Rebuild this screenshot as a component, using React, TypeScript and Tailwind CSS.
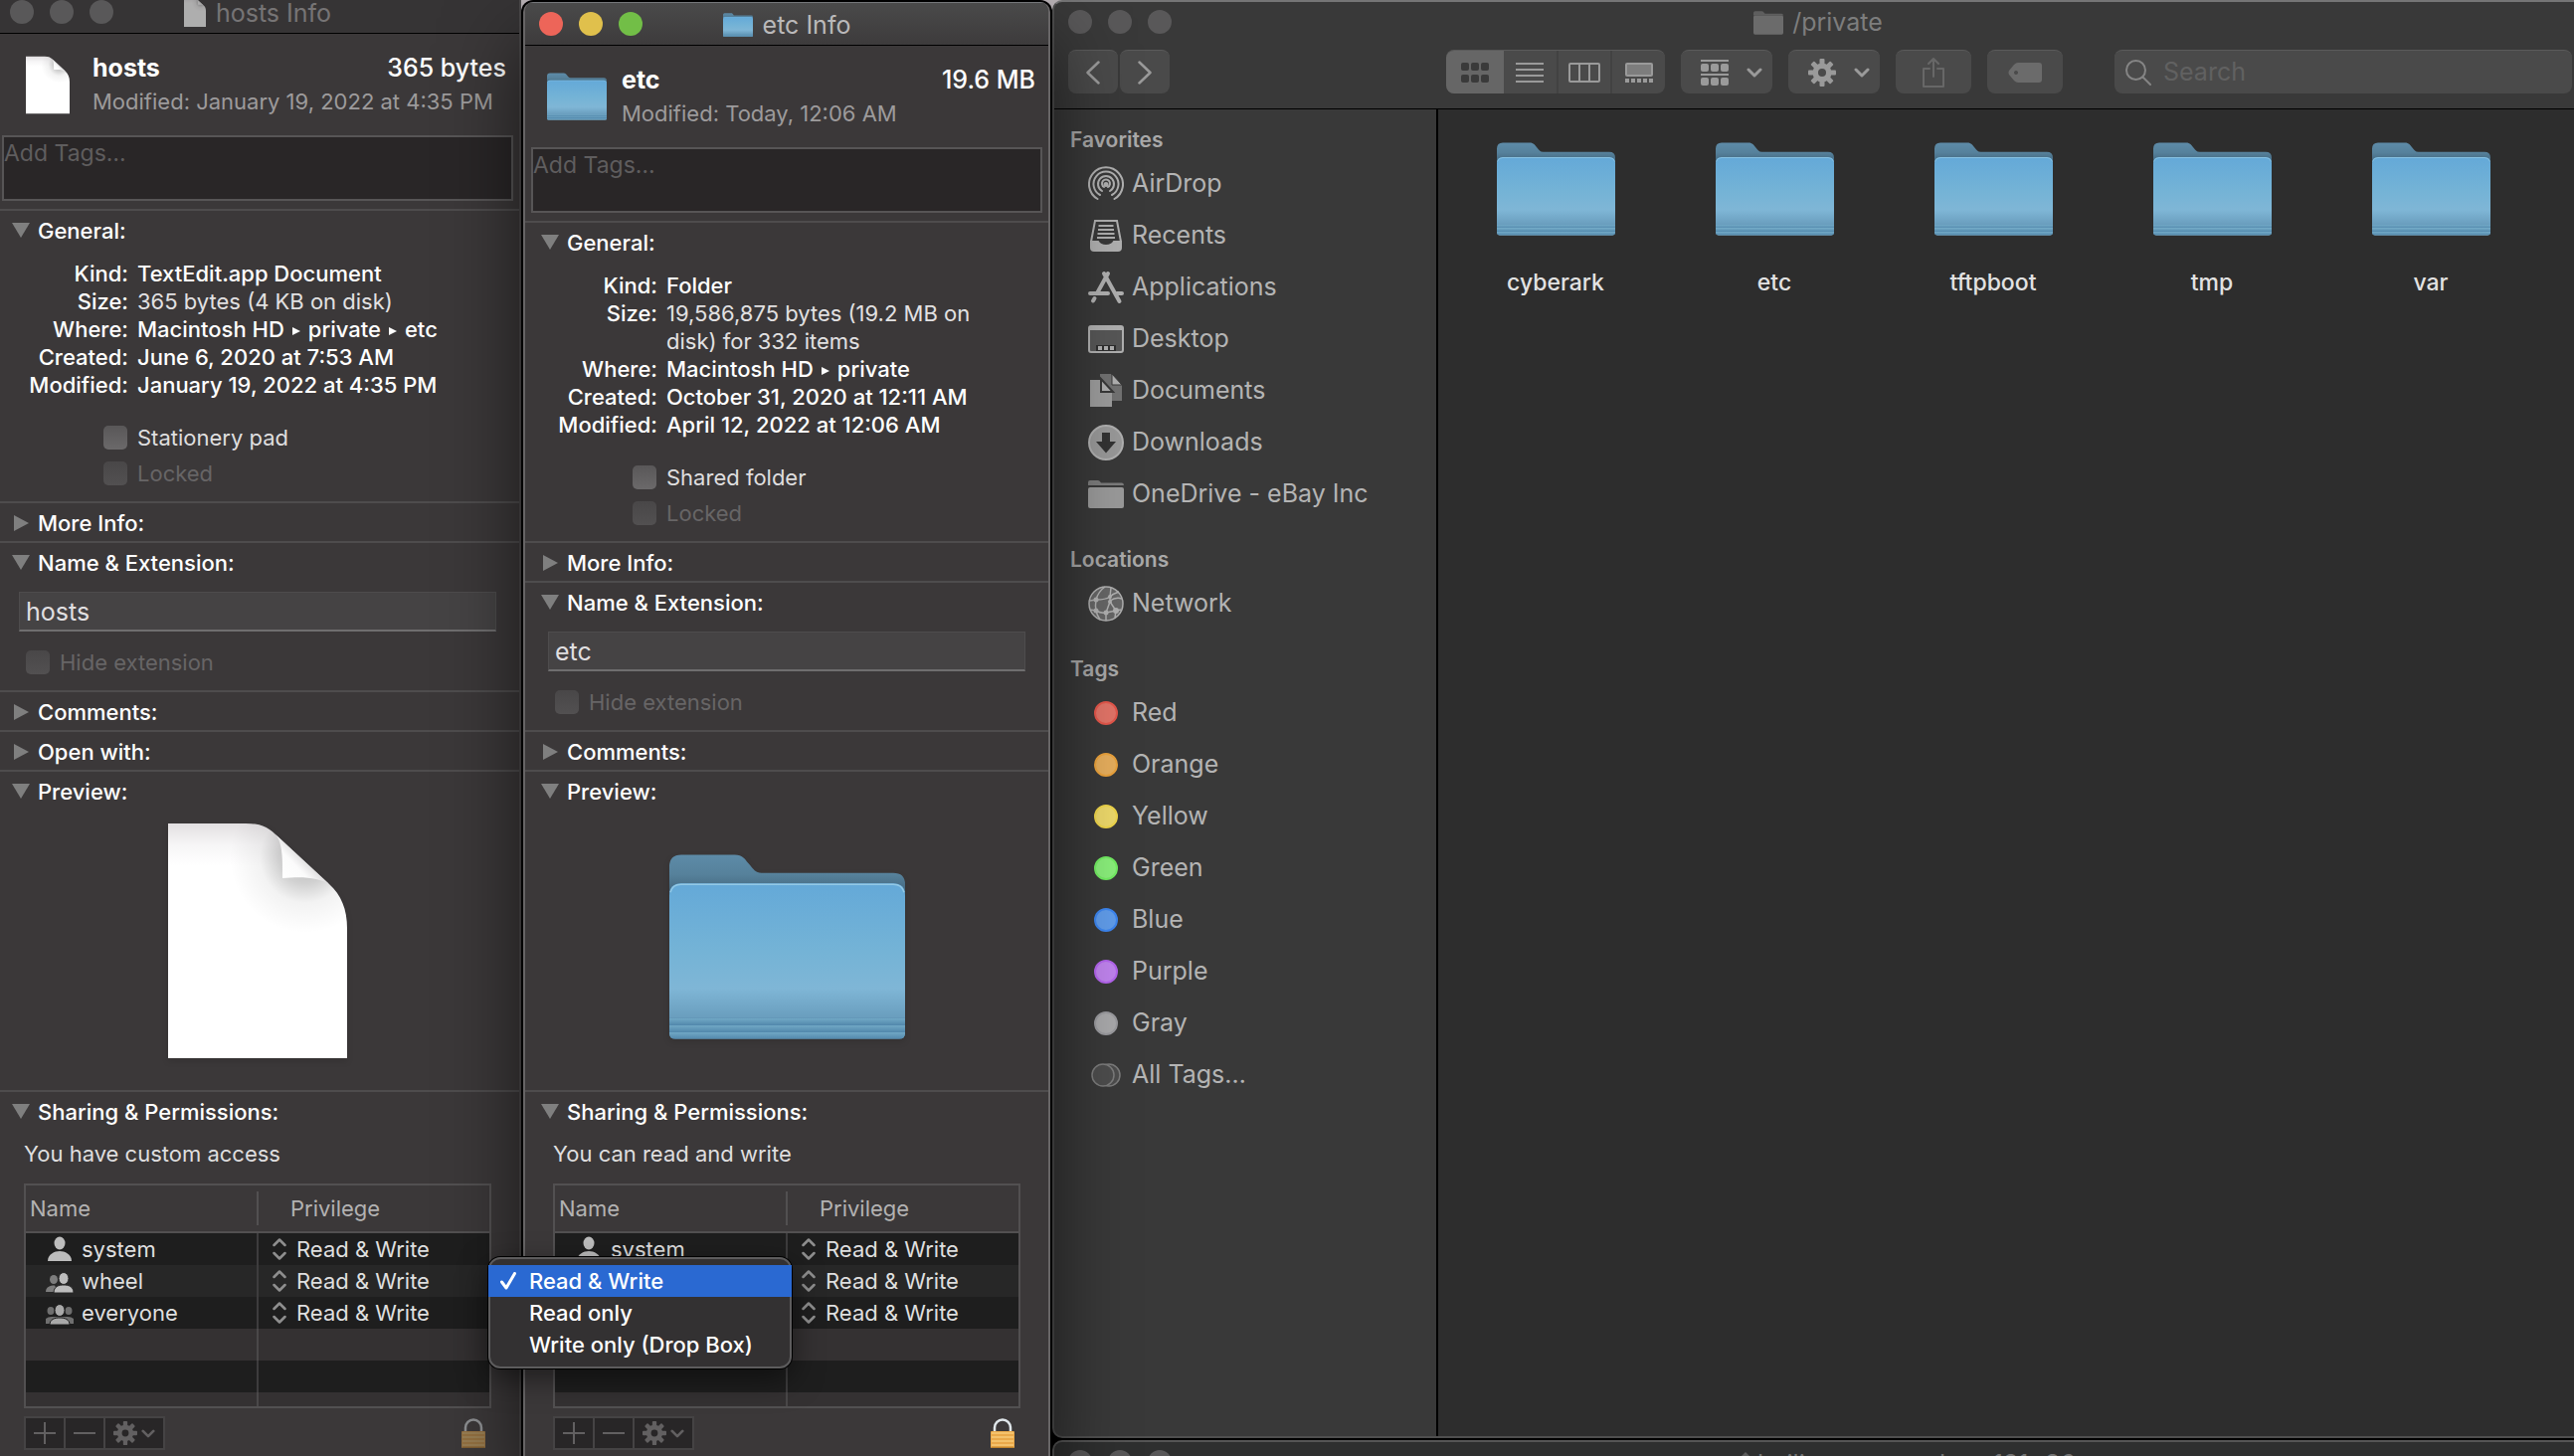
import { useId } from 'react';
import type { ReactNode } from 'react';

const Folder = ({ className }: { className?: string }) => {
  const id = useId();
  return (
    <svg viewBox="0 0 238 186" className={className} aria-hidden="true">
      <defs>
        <linearGradient id={`${id}b`} x1="0" y1="0" x2="0" y2="40" gradientUnits="userSpaceOnUse">
          <stop offset="0" stopColor="#5d8ba8" />
          <stop offset="0.5" stopColor="#56819b" />
          <stop offset="1" stopColor="#41647b" />
        </linearGradient>
        <linearGradient id={`${id}f`} x1="0" y1="29" x2="0" y2="165" gradientUnits="userSpaceOnUse">
          <stop offset="0" stopColor="#64a9d8" />
          <stop offset="0.5" stopColor="#74b3d6" />
          <stop offset="0.78" stopColor="#7fb6d6" />
          <stop offset="1" stopColor="#699dbd" />
        </linearGradient>
        <linearGradient id={`${id}s`} x1="0" y1="165" x2="0" y2="172" gradientUnits="userSpaceOnUse" spreadMethod="repeat">
          <stop offset="0" stopColor="#72a9c6" />
          <stop offset="1" stopColor="#5389ad" />
        </linearGradient>
      </defs>
      <path d="M0 40V12Q0 0 12 0H66C74 0 77 5 80 9C85 15 87 18.500 93 18.500H226Q238 18.500 238 30V44Z" fill={`url(#${id}b)`} />
      <path d="M0 41Q0 29 12 29H226Q238 29 238 41V180Q238 186 232 186H6Q0 186 0 180Z" fill={`url(#${id}f)`} />
      <path d="M0 165H238V180Q238 186 232 186H6Q0 186 0 180Z" fill={`url(#${id}s)`} />
      <path d="M1 38Q3 30 12 30H226Q235 30 237 38" fill="none" stroke="#93c9e6" strokeWidth="1.500" />
    </svg>
  );
};

const GrayFolder = ({ className }: { className?: string }) => (
  <svg viewBox="0 0 36 28" className={className} fill="currentColor" aria-hidden="true">
    <path d="M0 5V2Q0 0 2 0H10Q11.500 0 12.500 1.500L14 3H34Q36 3 36 5Z" opacity="0.75" />
    <path d="M0 6.500Q0 5 2 5H34Q36 5 36 6.500V26Q36 28 34 28H2Q0 28 0 26Z" />
  </svg>
);

const Page = ({ className }: { className?: string }) => {
  const id = useId();
  return (
    <svg viewBox="0 0 180 236" className={className} aria-hidden="true">
      <defs>
        <linearGradient id={`${id}t`} x1="0" y1="0" x2="0" y2="42" gradientUnits="userSpaceOnUse">
          <stop offset="0" stopColor="#e2dfe1" />
          <stop offset="0.5" stopColor="#f6f5f6" />
          <stop offset="1" stopColor="#ffffff" />
        </linearGradient>
        <radialGradient id={`${id}r`} cx="138" cy="34" r="76" gradientUnits="userSpaceOnUse">
          <stop offset="0" stopColor="#000" stopOpacity="0.3" />
          <stop offset="0.35" stopColor="#000" stopOpacity="0.18" />
          <stop offset="0.6" stopColor="#000" stopOpacity="0.05" />
          <stop offset="1" stopColor="#000" stopOpacity="0" />
        </radialGradient>
        <linearGradient id={`${id}c`} x1="115" y1="55" x2="137" y2="34" gradientUnits="userSpaceOnUse">
          <stop offset="0" stopColor="#ffffff" />
          <stop offset="0.6" stopColor="#fbfbfb" />
          <stop offset="1" stopColor="#dddcdd" />
        </linearGradient>
      </defs>
      <path d="M0 0H78C92 0 100 3 108 11L162 61C174 72 180 86 180 106V236H0Z" fill={`url(#${id}t)`} />
      <path d="M0 0H78C92 0 100 3 108 11L162 61C174 72 180 86 180 106V236H0Z" fill={`url(#${id}r)`} />
      <path d="M108 11C114 18 115.500 30 115 55C138 53 152 55 162 61Z" fill={`url(#${id}c)`} />
    </svg>
  );
};

const Gear = ({ className }: { className?: string }) => (
  <svg viewBox="0 0 28 28" className={className} fill="currentColor" aria-hidden="true">
    <mask id="gear-hole">
      <rect width="28" height="28" fill="#fff" />
      <circle cx="14" cy="14" r="4" fill="#000" />
    </mask>
    <g mask="url(#gear-hole)">
      {[0, 45, 90, 135].map((a) => (
        <rect key={a} x="11.500" y="0" width="5" height="28" rx="1" transform={`rotate(${a} 14 14)`} />
      ))}
      <circle cx="14" cy="14" r="9.500" />
    </g>
  </svg>
);

const ChevronDown = ({ className }: { className?: string }) => (
  <svg viewBox="0 0 16 10" className={className} fill="none" stroke="currentColor" strokeWidth="3" strokeLinecap="round" strokeLinejoin="round" aria-hidden="true">
    <path d="M2 2l6 6 6-6" />
  </svg>
);

const UpDown = () => (
  <svg viewBox="0 0 14 22" className="h-[22px] w-[14px] shrink-0 text-[#8f8f8f]" fill="none" stroke="currentColor" strokeWidth="2.500" strokeLinecap="round" strokeLinejoin="round" aria-hidden="true">
    <path d="M1.500 7L7 1.500 12.500 7M1.500 15L7 20.500 12.500 15" />
  </svg>
);

const UserOne = () => (
  <svg viewBox="0 0 28 26" className="h-[26px] w-7" fill="#bdbdbd" aria-hidden="true">
    <ellipse cx="14" cy="7" rx="5.500" ry="6.500" />
    <path d="M2 25C2 18 9 15 14 15S26 18 26 25Z" />
  </svg>
);

const UserTwo = () => (
  <svg viewBox="0 0 28 26" className="h-[26px] w-7" aria-hidden="true">
    <g fill="#7d7d7d">
      <ellipse cx="8" cy="11.500" rx="4" ry="4.500" />
      <path d="M0 24C0 19 4 17.500 9 17.500L12 24Z" />
    </g>
    <g fill="#bdbdbd" stroke="#272727" strokeWidth="1">
      <path d="M8 25C8 18.500 13 17 18 17S28 18.500 28 25Z" />
      <ellipse cx="18" cy="10.500" rx="5" ry="6" />
    </g>
  </svg>
);

const UserThree = () => (
  <svg viewBox="0 0 28 26" className="h-[26px] w-7" aria-hidden="true">
    <g fill="#6f6f6f">
      <ellipse cx="5" cy="11" rx="3.500" ry="4" />
      <ellipse cx="23" cy="11" rx="3.500" ry="4" />
      <path d="M0 24V19Q2 17 6 17H22Q26 17 28 19V24Z" />
    </g>
    <g fill="#a9a9a9" stroke="#1e1e1e" strokeWidth="1">
      <path d="M4 25C4 19.500 9 18 14 18S24 19.500 24 25Z" />
      <ellipse cx="14" cy="10.500" rx="5" ry="6" />
    </g>
  </svg>
);

const Lock = ({ dim }: { dim?: boolean }) => (
  <svg viewBox="0 0 24 30" className={dim ? 'h-[30px] w-6 opacity-50' : 'h-[30px] w-6'} aria-hidden="true">
    <path d="M4 16V9.500a8 8 0 0 1 16 0V16" fill="none" stroke="#dfe6ea" strokeWidth="2.500" />
    <rect y="13" width="24" height="17" rx="1" fill="#eaa94a" />
    <path d="M1 15h22M1 19h22M1 23h22M1 27h22" stroke="#f8ca78" strokeWidth="1.500" />
    <path d="M1 29.300h22" stroke="#b47a26" strokeWidth="1" />
  </svg>
);

const lightColors = {
  on: ['bg-[#ed6559]', 'bg-[#e0c04c]', 'bg-[#72be47]'],
  off: ['bg-[#595859]', 'bg-[#595859]', 'bg-[#595859]'],
};

const TrafficLights = ({ active }: { active?: boolean }) => (
  <div className="flex gap-4">
    {['Close', 'Minimize', 'Zoom'].map((name, i) => (
      <button key={name} aria-label={name} className={`size-6 rounded-full ${lightColors[active ? 'on' : 'off'][i]}`} />
    ))}
  </div>
);

type SectionProps = { title: string; open?: boolean; children?: ReactNode };

const Section = ({ title, open, children }: SectionProps) => (
  <section className="border-t-2 border-[#4e4c4d]">
    <h3>
      <button aria-expanded={!!open} className="flex h-[38px] items-center gap-2 pt-[2px] pl-4 text-[22px] font-medium text-white">
        <svg viewBox="0 0 18 16" className="h-4 w-[18px] fill-[#7f7f7f]" aria-hidden="true">
          {open ? <path d="M0 0H18L9 15Z" /> : <path d="M2 0V16L17 8Z" />}
        </svg>
        {title}
      </button>
    </h3>
    {children}
  </section>
);

const Check = ({ label, disabled }: { label: string; disabled?: boolean }) => (
  <label className={`flex h-6 items-center gap-[10px] text-[22px] ${disabled ? 'text-[#676566]' : 'text-[#dfdedf]'}`}>
    <input
      type="checkbox"
      disabled={disabled}
      className="size-6 appearance-none rounded-[5px] bg-linear-to-b from-[#595758] to-[#6b696a] disabled:from-[#494748] disabled:to-[#525051]"
    />
    {label}
  </label>
);

const Path = ({ parts }: { parts: string[] }) => (
  <span className="flex">
    {parts.map((part, i) => (
      <span key={part} className="flex items-center">
        {i > 0 && (
          <svg viewBox="0 0 8 8" className="mx-2 mt-[3px] size-2 fill-current" aria-hidden="true">
            <path d="M0 0V8L8 4Z" />
          </svg>
        )}
        {part}
      </span>
    ))}
  </span>
);

type InfoProps = {
  name: string;
  size: string;
  modified: string;
  active?: boolean;
  icon: ReactNode;
  titleIcon: ReactNode;
  preview: ReactNode;
  rows: [string, ReactNode][];
  option: string;
  openWith?: boolean;
  access: string;
  className: string;
};

const users = [
  { name: 'system', icon: <UserOne />, bg: 'bg-[#1e1e1e]' },
  { name: 'wheel', icon: <UserTwo />, bg: 'bg-[#272727]' },
  { name: 'everyone', icon: <UserThree />, bg: 'bg-[#1e1e1e]' },
];

const Permissions = () => (
  <div className="mx-7 border-2 border-[#525051]">
    <table className="w-full table-fixed border-separate border-spacing-0 text-[22px]">
      <thead className="text-[#b3b2b2]">
        <tr className="h-12">
          <th className="w-[234px] border-b-2 border-[#525051] p-0 text-left font-normal">
            <div className="flex h-[34px] items-center border-r-2 border-[#525051] pl-1">Name</div>
          </th>
          <th className="border-b-2 border-[#525051] p-0 pl-8 text-left font-normal">Privilege</th>
        </tr>
      </thead>
      <tbody className="text-[#dfdfdf]">
        {users.map((u) => (
          <tr key={u.name} className={`h-8 ${u.bg}`}>
            <td className="border-r-2 border-[#3d3c3d] p-0">
              <div className="flex h-8 items-center gap-2 pl-5">
                {u.icon}
                {u.name}
              </div>
            </td>
            <td className="p-0">
              <label className="flex h-8 items-center gap-[10px] pl-[14px]">
                <UpDown />
                <select aria-label={`Privilege for ${u.name}`} className="appearance-none bg-transparent">
                  <option>Read &amp; Write</option>
                  <option>Read only</option>
                  <option>Write only (Drop Box)</option>
                </select>
              </label>
            </td>
          </tr>
        ))}
        <tr className="h-8 bg-[#343132]">
          <td className="border-r-2 border-[#4a4849] p-0" />
          <td className="p-0" />
        </tr>
        <tr className="h-8 bg-[#1e1e1e]">
          <td className="border-r-2 border-[#3d3c3d] p-0" />
          <td className="p-0" />
        </tr>
        <tr className="h-[14px] bg-[#343132]">
          <td className="border-r-2 border-[#4a4849] p-0" />
          <td className="p-0" />
        </tr>
      </tbody>
    </table>
  </div>
);

const InfoWindow = (p: InfoProps) => (
  <div className={`w-[530px] shrink-0 overflow-hidden rounded-t-[10px] border-x-2 bg-[#3b3839] ${p.className}`}>
    <div
      className={`grid h-11 grid-cols-[1fr_auto_1fr] items-center border-b border-black px-[14px] text-[25px] ${
        p.active ? 'border-t border-t-[#75777a] bg-linear-to-b from-[#4a4a4a] to-[#3d3b3c] text-[#bab9ba]' : 'bg-[#363435] text-[#767475]'
      }`}
    >
      <TrafficLights active={p.active} />
      <h2 className="flex items-center gap-[10px] pt-[2px] leading-8">
        {p.titleIcon}
        {p.name} Info
      </h2>
    </div>

    <div className="flex h-[102px] items-center gap-[13px] pr-[13px] pl-5">
      <div className="flex size-16 shrink-0 items-center justify-center">{p.icon}</div>
      <div className="flex-1 pt-[3px]">
        <div className="flex h-8 items-center justify-between text-[25px] text-white">
          <strong className="font-bold">{p.name}</strong>
          <span className="font-medium">{p.size}</span>
        </div>
        <div className="flex h-9 items-center text-[22px] whitespace-nowrap text-[#9d9b9c]">Modified: {p.modified}</div>
      </div>
    </div>

    <div className="mx-[6px] mb-2 h-[66px] border-2 border-[#575556] bg-[#292627]">
      <textarea
        aria-label="Tags"
        placeholder="Add Tags…"
        className="block h-full w-full resize-none text-[23px] leading-8 placeholder:text-[#5f5d5e] placeholder:opacity-100"
      />
    </div>

    <Section title="General:" open>
      <dl className="grid grid-cols-[133px_1fr] gap-x-[9px] pt-[11px] pr-8 pb-[27px] text-[22px] leading-7 font-medium text-white">
        {p.rows.map(([k, v]) => (
          <div key={k} className="contents">
            <dt className="text-right">{k}:</dt>
            <dd className={k === 'Size' ? 'font-normal text-[#e2e1e2]' : ''}>{v}</dd>
          </div>
        ))}
      </dl>
      <div className="flex flex-col gap-3 pb-4 pl-[108px]">
        <Check label={p.option} />
        <Check label="Locked" disabled />
      </div>
    </Section>
    <Section title="More Info:" />
    <Section title="Name & Extension:" open>
      <div className="px-[23px] pt-[11px]">
        <input
          aria-label="Name"
          defaultValue={p.name}
          className="block h-10 w-full border border-b-2 border-[#4e4c4d] border-b-[#6f6e6f] bg-[#454344] px-[6px] text-[25px] text-[#e0dfe0]"
        />
      </div>
      <div className="pt-[19px] pb-4 pl-[30px]">
        <Check label="Hide extension" disabled />
      </div>
    </Section>
    <Section title="Comments:" />
    {p.openWith && <Section title="Open with:" />}
    <Section title="Preview:" open>
      <div className="flex h-[282px] justify-center">{p.preview}</div>
    </Section>
    <Section title="Sharing & Permissions:" open>
      <p className="pt-[10px] pb-4 pl-7 text-[22px] leading-7 text-[#dfdedf]">{p.access}</p>
      <Permissions />
      <div className="mx-7 mt-2 flex items-center justify-between pr-[6px]">
        <div className="flex gap-[2px] border-2 border-[#454344] bg-[#454344] text-[#626061]">
          <button aria-label="Add" className="flex h-[30px] w-[38px] items-center justify-center bg-[#282627]">
            <svg viewBox="0 0 22 22" className="size-[22px]" stroke="currentColor" strokeWidth="2"><path d="M0 11h22M11 0v22" /></svg>
          </button>
          <button aria-label="Remove" className="flex h-[30px] w-[38px] items-center justify-center bg-[#282627]">
            <svg viewBox="0 0 22 22" className="size-[22px]" stroke="currentColor" strokeWidth="2"><path d="M0 11h22" /></svg>
          </button>
          <button aria-label="Actions" className="flex h-[30px] w-[58px] items-center justify-center gap-1 bg-[#282627]">
            <Gear className="size-6" />
            <ChevronDown className="h-[9px] w-[14px]" />
          </button>
        </div>
        <button aria-label="Unlock">
          <Lock dim={!p.active} />
        </button>
      </div>
    </Section>
  </div>
);

const favorites: [string, ReactNode][] = [
  [
    'AirDrop',
    <g fill="none" stroke="currentColor" strokeWidth="2" strokeLinecap="round">
      <path d="M9.500 33A17 17 0 1 1 26.500 33" />
      <path d="M12 29A12.500 12.500 0 1 1 24 29" />
      <path d="M14 25A8 8 0 1 1 22 25" />
      <path d="M16 21A4 4 0 1 1 20 21" />
      <circle cx="18" cy="18.500" r="1.500" fill="currentColor" />
    </g>,
  ],
  [
    'Recents',
    <g fill="none" stroke="currentColor" strokeWidth="2">
      <path d="M3 24L7 3H29L33 24" />
      <path d="M10.500 8H25.500M10 12H26M9.500 16H26.500M9 20H27" />
      <path d="M3 24H10Q12 28 18 28T26 24H33V30Q33 33 30 33H6Q3 33 3 30Z" fill="currentColor" />
    </g>,
  ],
  [
    'Applications',
    <g fill="none" stroke="currentColor" strokeWidth="4" strokeLinecap="round">
      <path d="M16 4L31.500 32M20 4L9.500 23M6.500 29L5 31.500" />
      <path d="M2 24H20M29 24H34" />
    </g>,
  ],
  [
    'Desktop',
    <g>
      <rect x="1" y="5" width="34" height="26" rx="2" fill="#575757" stroke="currentColor" strokeWidth="2" />
      <path d="M1 5H35V9H1Z" fill="currentColor" />
      <path d="M8 24H28V30H8Z" fill="#2f2f2f" />
      <path d="M10 25h4v4h-4zM16 25h4v4h-4zM22 25h4v4h-4z" fill="currentColor" />
    </g>,
  ],
  [
    'Documents',
    <g>
      <path d="M12 1H23L34 12V28H12Z" fill="#727272" />
      <path d="M24 1L34 12H24Z" fill="currentColor" stroke="#393939" />
      <path d="M2 7H13L24 19V34H2Z" fill="#9c9c9c" />
      <path d="M13 6L25 19H13Z" fill="currentColor" stroke="#393939" strokeWidth="2" />
    </g>,
  ],
  [
    'Downloads',
    <g>
      <circle cx="18" cy="18" r="17" fill="#999" stroke="currentColor" strokeWidth="2" />
      <path d="M14 8H22V17H28L18 28.500 8 17H14Z" fill="#333" />
    </g>,
  ],
  [
    'OneDrive - eBay Inc',
    <g>
      <path d="M0 9V6Q0 4 2 4H10Q12 4 13 6.500H34Q36 6.500 36 9Z" fill="#7c7c7c" />
      <path d="M0 13Q0 11 2 11H34Q36 11 36 13V30Q36 32 34 32H2Q0 32 0 30Z" fill="#9a9a9a" />
    </g>,
  ],
];

const network = (
  <g fill="none" stroke="currentColor" strokeWidth="1.500">
    <circle cx="18" cy="18" r="17" fill="#666" />
    <path d="M8 14C12 14 18 14 22 11M22 11L23 2M22 11Q25 8 31 6M22 15Q28 11 34 13M22 11V16L28 25M22 16L18 27M8 25Q13 28 18 27T28 25M8 14Q7 20 8 25T12 34M18 27V35M8 14Q10 6 17 1M2 15L8 14M2 24L8 25M28 25L33 24M28 25L27 32" />
    <g fill="currentColor" stroke="none">
      <circle cx="8" cy="14" r="2.500" />
      <circle cx="22" cy="11" r="2" />
      <circle cx="22" cy="16" r="2" />
      <circle cx="8" cy="25" r="2.500" />
      <circle cx="18" cy="27" r="2.500" />
      <circle cx="28" cy="25" r="3" />
    </g>
  </g>
);

const tags: [string, string][] = [
  ['Red', 'border-[#e4574b] bg-[#e27468]'],
  ['Orange', 'border-[#eaa23c] bg-[#e6ae5d]'],
  ['Yellow', 'border-[#efd64b] bg-[#edd96b]'],
  ['Green', 'border-[#72ec62] bg-[#8aef7b]'],
  ['Blue', 'border-[#3d86f0] bg-[#619deb]'],
  ['Purple', 'border-[#b465ee] bg-[#c084ee]'],
  ['Gray', 'border-[#9a9a9e] bg-[#a9a9ab]'],
];

const SideItem = ({ label, children }: { label: string; children: ReactNode }) => (
  <li>
    <a href="#" className="flex h-[52px] items-center gap-2 pl-[34px] text-[25px] text-[#b4b4b4]">
      <span className="flex w-9 justify-center">{children}</span>
      {label}
    </a>
  </li>
);

const SideHeading = ({ children }: { children: ReactNode }) => (
  <h3 className="pt-[27px] pb-[5px] pl-4 text-[21px] leading-[26px] font-semibold text-[#a9a9a9] first:pt-[18px]">{children}</h3>
);

const SideIcon = ({ children }: { children: ReactNode }) => (
  <svg viewBox="0 0 36 36" className="size-9 text-[#b0b0b0]" aria-hidden="true">
    {children}
  </svg>
);

const toolButton = 'flex h-11 items-center justify-center rounded-lg border-t border-[#5a5a5a] bg-[#4a4a4a]';
const segment = 'flex flex-1 items-center justify-center border-r-2 border-[#424242] last:border-r-0';

const Toolbar = () => (
  <div className="mt-2 flex h-11 gap-4 pr-[10px] pl-[14px] text-[#9a9a9a]">
    <div className="flex w-[364px] shrink-0 gap-[2px]">
      <button aria-label="Back" className={`w-[50px] ${toolButton}`}>
        <svg viewBox="0 0 14 24" className="h-6 w-[14px]" fill="none" stroke="currentColor" strokeWidth="2.500" strokeLinecap="round" strokeLinejoin="round"><path d="M12.500 1.500L1.500 12l11 10.500" /></svg>
      </button>
      <button aria-label="Forward" className={`w-[50px] ${toolButton}`}>
        <svg viewBox="0 0 14 24" className="h-6 w-[14px]" fill="none" stroke="currentColor" strokeWidth="2.500" strokeLinecap="round" strokeLinejoin="round"><path d="M1.500 1.500L12.500 12l-11 10.500" /></svg>
      </button>
    </div>
    <div className="flex w-[220px] shrink-0 overflow-hidden rounded-lg border-t border-[#5a5a5a] bg-[#4a4a4a]">
      <button aria-label="Icon view" className="flex w-[58px] items-center justify-center bg-[#666] text-[#3a3a3a]">
        <svg viewBox="0 0 28 20" className="h-5 w-7" fill="currentColor">
          <rect width="8" height="8" rx="2" /><rect x="10" width="8" height="8" rx="2" /><rect x="20" width="8" height="8" rx="2" />
          <rect y="12" width="8" height="8" rx="2" /><rect x="10" y="12" width="8" height="8" rx="2" /><rect x="20" y="12" width="8" height="8" rx="2" />
        </svg>
      </button>
      <button aria-label="List view" className={segment}>
        <svg viewBox="0 0 28 20" className="h-5 w-7" stroke="currentColor" strokeWidth="2"><path d="M0 1h28M0 7h28M0 13h28M0 19h28" /></svg>
      </button>
      <button aria-label="Column view" className={segment}>
        <svg viewBox="0 0 32 20" className="h-5 w-8" fill="none" stroke="currentColor" strokeWidth="2"><rect x="1" y="1" width="30" height="18" rx="1" /><path d="M11 1v18M21 1v18" /></svg>
      </button>
      <button aria-label="Gallery view" className={segment}>
        <svg viewBox="0 0 28 20" className="h-5 w-7" fill="currentColor"><rect width="28" height="14" rx="2" /><path d="M2 2H26V12H2Z" fill="#7d7d7d" /><path d="M0 16h4v4H0zM6 16h4v4H6zM12 16h4v4h-4zM18 16h4v4h-4zM24 16h4v4h-4z" /></svg>
      </button>
    </div>
    <button aria-label="Group items" className={`w-[92px] shrink-0 gap-[18px] pl-[10px] ${toolButton}`}>
      <svg viewBox="0 0 28 26" className="h-[26px] w-7" fill="currentColor">
        <path d="M0 0h28v2H0zM0 14h28v2H0z" />
        <rect y="4" width="8" height="8" rx="2" /><rect x="10" y="4" width="8" height="8" rx="2" /><rect x="20" y="4" width="8" height="8" rx="2" />
        <rect y="18" width="8" height="8" rx="2" /><rect x="10" y="18" width="8" height="8" rx="2" /><rect x="20" y="18" width="8" height="8" rx="2" />
      </svg>
      <ChevronDown className="h-[10px] w-4" />
    </button>
    <button aria-label="Actions" className={`w-[92px] shrink-0 gap-[18px] pl-[10px] ${toolButton}`}>
      <Gear className="size-7" />
      <ChevronDown className="h-[10px] w-4" />
    </button>
    <button aria-label="Share" className={`w-[76px] shrink-0 text-[#676767] ${toolButton}`}>
      <svg viewBox="0 0 22 30" className="h-[30px] w-[22px]" fill="none" stroke="currentColor" strokeWidth="2" strokeLinecap="round" strokeLinejoin="round">
        <path d="M7 11H1V29H21V11H15M11 19V1M6 6l5-5 5 5" />
      </svg>
    </button>
    <button aria-label="Edit tags" className={`w-[76px] shrink-0 text-[#6b6b6b] ${toolButton}`}>
      <svg viewBox="0 0 34 20" className="h-5 w-[34px]" fill="currentColor">
        <path fillRule="evenodd" d="M10 0H31Q34 0 34 3V17Q34 20 31 20H10Q8 20 6 18L1 12Q0 10 1 8L6 2Q8 0 10 0ZM8 8a2 2 0 1 0 0.010 0Z" />
      </svg>
    </button>
    <label className={`ml-9 flex-1 gap-3 pl-[11px] ${toolButton}`}>
      <svg viewBox="0 0 26 26" className="size-[26px] text-[#858585]" fill="none" stroke="currentColor" strokeWidth="2" strokeLinecap="round"><circle cx="10.500" cy="10.500" r="9.500" /><path d="M17.500 17.500L25 25" /></svg>
      <input type="search" aria-label="Search" placeholder="Search" className="min-w-0 flex-1 text-[25px] placeholder:text-[#616161] placeholder:opacity-100" />
    </label>
  </div>
);

const Finder = () => (
  <div className="flex min-h-0 flex-1 flex-col overflow-hidden rounded-[10px] border-2 border-[#4f4f4f] border-t-[#757576] bg-[#393939]">
    <header className="h-[108px] shrink-0 border-b border-black">
      <div className="grid h-10 grid-cols-[1fr_auto_1fr] items-center px-[14px] text-[25px] text-[#7d7d7d]">
        <TrafficLights />
        <h1 className="flex items-center gap-[9px] pt-[2px]">
          <GrayFolder className="h-6 w-[30px] text-[#6b6b6b]" />
          /private
        </h1>
      </div>
      <Toolbar />
    </header>
    <div className="flex min-h-0 flex-1">
      <nav className="w-[386px] shrink-0 border-r-2 border-black">
        <SideHeading>Favorites</SideHeading>
        <ul>
          {favorites.map(([label, icon]) => (
            <SideItem key={label} label={label}>
              <SideIcon>{icon}</SideIcon>
            </SideItem>
          ))}
        </ul>
        <SideHeading>Locations</SideHeading>
        <ul>
          <SideItem label="Network">
            <SideIcon>{network}</SideIcon>
          </SideItem>
        </ul>
        <SideHeading>Tags</SideHeading>
        <ul>
          {tags.map(([label, color]) => (
            <SideItem key={label} label={label}>
              <span className={`size-6 rounded-full border-2 ${color}`} />
            </SideItem>
          ))}
          <SideItem label="All Tags…">
            <svg viewBox="0 0 30 24" className="h-6 w-[30px]" fill="#4d4d4d" stroke="#7c7c7c" strokeWidth="1.500" aria-hidden="true">
              <circle cx="18" cy="12" r="11" />
              <circle cx="12" cy="12" r="11" />
            </svg>
          </SideItem>
        </ul>
      </nav>
      <main className="flex-1 bg-[#2d2d2d] pt-[33px] pl-2">
        <ul className="flex flex-wrap">
          {['cyberark', 'etc', 'tftpboot', 'tmp', 'var'].map((name) => (
            <li key={name} className="flex w-[220px] flex-col items-center">
              <Folder className="h-[94px] w-[119px]" />
              <span className="mt-[31px] text-[23px] leading-8 font-medium text-[#e2e2e2]">{name}</span>
            </li>
          ))}
        </ul>
      </main>
    </div>
  </div>
);

const privilegeItem = 'relative z-10 -mx-[2px] flex h-8 w-[calc(100%+4px)] items-center pl-3 text-left';

const PrivilegeMenu = () => (
  <div
    role="menu"
    className="absolute top-[1264px] left-[491px] z-20 w-[305px] rounded-xl border-2 border-[#5d5c5d] bg-[#333132] py-[6px] text-[22px] font-medium text-white shadow-[0_0_0_1px_#000,0_10px_30px_rgba(0,0,0,0.5)]"
  >
    <button role="menuitemradio" aria-checked="true" className={`bg-[#2a69d2] ${privilegeItem}`}>
      <span className="w-[29px]">
        <svg viewBox="0 0 16 18" className="h-[18px] w-4" fill="none" stroke="currentColor" strokeWidth="3" strokeLinecap="round" strokeLinejoin="round" aria-hidden="true">
          <path d="M1.500 10L6 16 14.500 1.500" />
        </svg>
      </span>
      Read &amp; Write
    </button>
    <button role="menuitemradio" aria-checked="false" className={privilegeItem}>
      <span className="w-[29px]" />
      Read only
    </button>
    <button role="menuitemradio" aria-checked="false" className={privilegeItem}>
      <span className="w-[29px]" />
      Write only (Drop Box)
    </button>
  </div>
);

export default function App() {
  return (
    <div className="relative flex h-screen gap-[2px] overflow-hidden bg-[linear-gradient(#b9b2b6_0_14px,#000_14px)] font-[Inter,'Liberation_Sans',sans-serif]">
      <InfoWindow
        name="hosts"
        size="365 bytes"
        modified="January 19, 2022 at 4:35 PM"
        icon={<Page className="h-[59px] w-11" />}
        titleIcon={<Page className="h-[29px] w-[22px] opacity-60" />}
        preview={<Page className="mt-[14px] h-[236px] w-[180px] drop-shadow-md" />}
        rows={[
          ['Kind', 'TextEdit.app Document'],
          ['Size', '365 bytes (4 KB on disk)'],
          ['Where', <Path parts={['Macintosh HD', 'private', 'etc']} />],
          ['Created', 'June 6, 2020 at 7:53 AM'],
          ['Modified', 'January 19, 2022 at 4:35 PM'],
        ]}
        option="Stationery pad"
        openWith
        access="You have custom access"
        className="-mt-[10px] -ml-[6px] border-[#4a4849]"
      />
      <InfoWindow
        active
        name="etc"
        size="19.6 MB"
        modified="Today, 12:06 AM"
        icon={<Folder className="h-12 w-[60px]" />}
        titleIcon={<Folder className="h-6 w-[30px]" />}
        preview={<Folder className="mt-[45px] h-[186px] w-[237px] drop-shadow-md" />}
        rows={[
          ['Kind', 'Folder'],
          ['Size', '19,586,875 bytes (19.2 MB on disk) for 332 items'],
          ['Where', <Path parts={['Macintosh HD', 'private']} />],
          ['Created', 'October 31, 2020 at 12:11 AM'],
          ['Modified', 'April 12, 2022 at 12:06 AM'],
        ]}
        option="Shared folder"
        access="You can read and write"
        className="z-10 mt-[2px] border-[#676566] shadow-[0_0_0_2px_#000,0_40px_80px_rgba(0,0,0,0.6)]"
      />
      <div className="-mr-[10px] flex min-w-0 flex-1 flex-col gap-[2px]">
        <Finder />
        <div className="-mr-[178px] h-4 shrink-0 overflow-hidden rounded-t-[10px] border-2 border-b-0 border-[#555] bg-[#2e2f2f]">
          <div className="grid grid-cols-[1fr_auto_1fr] px-[14px] pt-2 text-[25px] leading-7 text-[#747474]">
            <TrafficLights />
            <span className="flex gap-1">
              <svg viewBox="0 0 16 20" className="mt-[2px] h-5 w-4" fill="#5c5c5c" aria-hidden="true">
                <path d="M8 0L16 8V20H0V8Z" />
              </svg>
              bailiyuan — -zsh — 131×36
            </span>
          </div>
        </div>
      </div>
      <PrivilegeMenu />
    </div>
  );
}
